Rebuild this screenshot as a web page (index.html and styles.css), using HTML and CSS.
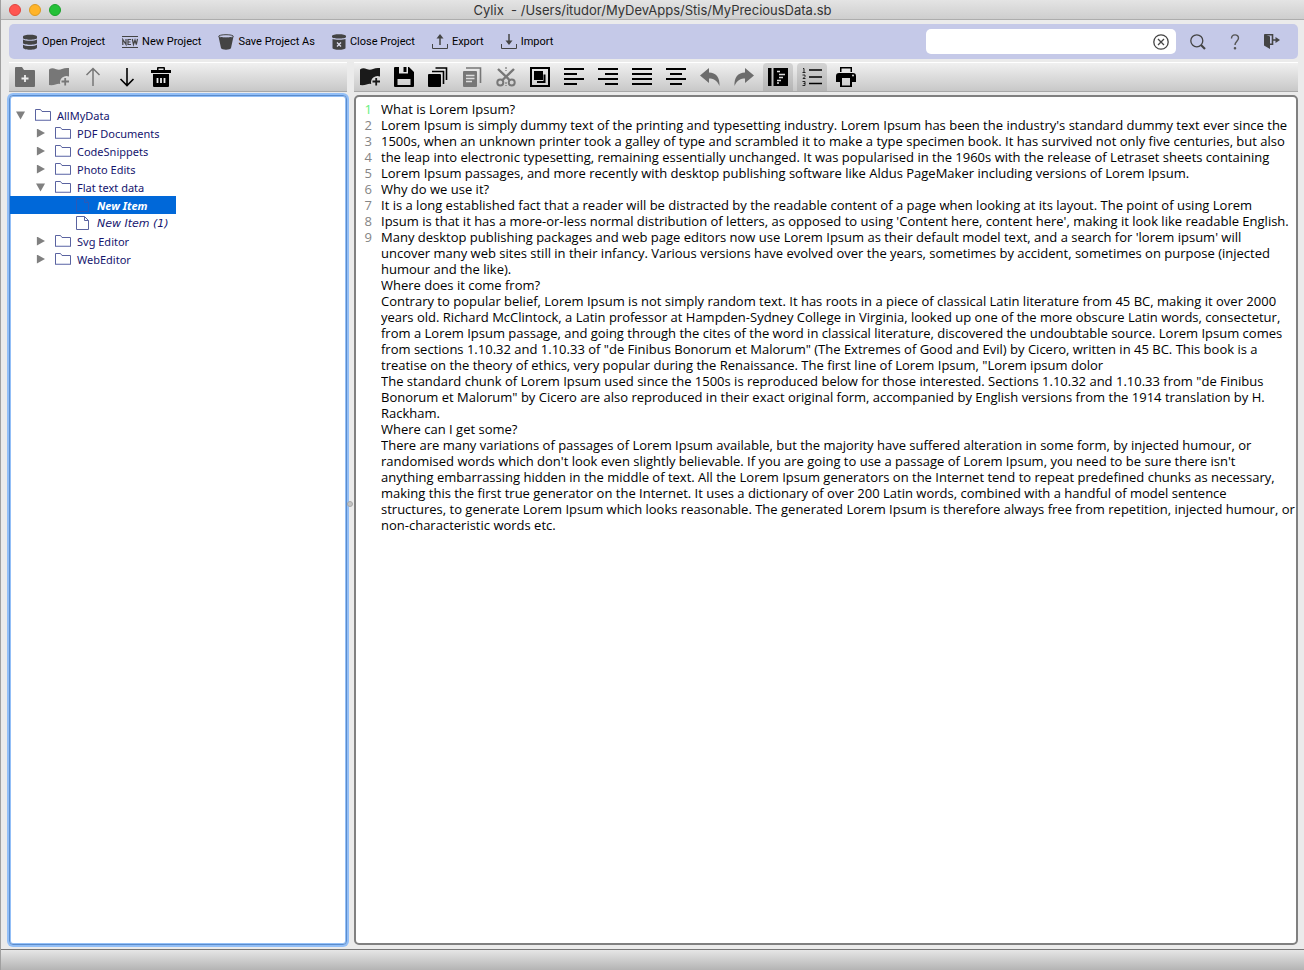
FILE: index.html
```html
<!DOCTYPE html>
<html lang="en">
  <head>
    <meta charset="UTF-8" />
    <meta name="viewport" content="width=device-width, initial-scale=1.0" />
    <title>Cylix - /Users/itudor/MyDevApps/Stis/MyPreciousData.sb</title>
    <link rel="stylesheet" href="styles.css" />
  </head>
  <body>
    <!-- shared shapes for the tree -->
    <svg class="defs" aria-hidden="true">
      <symbol id="folder" viewBox="0 0 16 14">
        <path d="M.5 12.5v-11h5l1.500 2h8.500v9z" fill="none" stroke="#5a63a0" />
        <path d="M1 12h14" stroke="#a9b0d4" />
      </symbol>
      <symbol id="file" viewBox="0 0 16 16">
        <path d="M1.500 1.500h8l4 4v9h-12zM9.500 1.500v4h4" fill="none" stroke="currentColor" />
      </symbol>
    </svg>

    <header class="titlebar">
      <div class="lights">
        <button class="light red" aria-label="Close window"></button>
        <button class="light yellow" aria-label="Minimize window"></button>
        <button class="light green" aria-label="Zoom window"></button>
      </div>
      <h1 class="title">Cylix&nbsp; - /Users/itudor/MyDevApps/Stis/MyPreciousData.sb</h1>
    </header>

    <main class="content">
      <nav class="menu">
        <button class="menu-btn">
          <svg width="16" height="16" viewBox="0 0 16 16" fill="#444"><path d="M1 2.500C1 0 15 0 15 2.500v1.500c0 2.300-14 2.300-14 0zM1 5.500c2 1.700 12 1.700 14 0V9c0 2.300-14 2.300-14 0zM1 10.800c2 1.700 12 1.700 14 0v2.700c0 3-14 3-14 0z" /></svg>
          Open Project
        </button>
        <button class="menu-btn">
          <svg width="16" height="16" viewBox="0 0 16 16" fill="none" stroke="#444"><path d="M0 2.500h16M0 13.500h16" /><path d="M.8 11V5.500L4 10.500V5M9 5.500H6v5h3M6 8h2.500M10.300 5l1.200 5.500L13 6l1.300 4.500L15.500 5" stroke-width="1.200" /></svg>
          New Project
        </button>
        <button class="menu-btn">
          <svg width="16" height="16" viewBox="0 0 16 16"><path d="M.5 2.500c2 2 13 2 15 0L13 14c-.5 2.300-9.500 2.300-10 0z" fill="#444" /><ellipse cx="8" cy="2.300" rx="7.400" ry="1.600" fill="#c5c9e8" stroke="#444" /></svg>
          Save Project As
        </button>
        <button class="menu-btn">
          <svg width="14" height="16" viewBox="0 0 14 16"><path d="M0 2c0-2.400 14-2.400 14 0v1c0 2-14 2-14 0zM.5 5c2 1 11 1 13 0v9c0 2.400-13 2.400-13 0z" fill="#444" /><path d="M5 8.500l4 4M9 8.500l-4 4" stroke="#dde" stroke-width="1.300" /></svg>
          Close Project
        </button>
        <button class="menu-btn">
          <svg width="16" height="16" viewBox="0 0 16 16" fill="none" stroke="#444"><path d="M.5 10v4.500h15V10" /><path d="M8 11V3" stroke-width="1.500" /><path d="M4.500 4.500L8 0l3.500 4.500z" fill="#444" stroke="none" /></svg>
          Export
        </button>
        <button class="menu-btn">
          <svg width="16" height="16" viewBox="0 0 16 16" fill="none" stroke="#444"><path d="M.5 10v4.500h15V10" /><path d="M8 0v8" stroke-width="1.500" /><path d="M4.500 6.500L8 11l3.500-4.500z" fill="#444" stroke="none" /></svg>
          Import
        </button>
        <div class="search">
          <input class="search-input" type="text" aria-label="Search" />
          <button class="icon-btn" aria-label="Clear search">
            <svg width="16" height="16" viewBox="0 0 16 16" fill="none" stroke="#444" stroke-width="1.300"><circle cx="8" cy="8" r="7.200" /><path d="M5 5l6 6M11 5l-6 6" /></svg>
          </button>
        </div>
        <div class="menu-end">
          <button class="icon-btn" aria-label="Find">
            <svg width="16" height="16" viewBox="0 0 16 16" fill="none" stroke="#444"><circle cx="6.800" cy="6.800" r="6" stroke-width="1.300" /><path d="M11 11l4 4" stroke-width="2.200" /></svg>
          </button>
          <button class="icon-btn" aria-label="Help">
            <svg width="16" height="16" viewBox="0 0 16 16" fill="none" stroke="#555" stroke-width="1.400"><path d="M4.500 4.500C4.500-.3 11.500-.3 11.500 4c0 3-3.500 3.500-3.500 7" /><circle cx="8" cy="14.300" r=".6" fill="#555" /></svg>
          </button>
          <button class="icon-btn" aria-label="Exit">
            <svg width="16" height="16" viewBox="0 0 16 16"><path d="M0 0l6 2.500V15l-6-3.500z" fill="#444" /><path d="M1 .7h7.500v9.500H6M9 6h3" fill="none" stroke="#444" stroke-width="1.600" /><path d="M11.500 3l4.500 3-4.500 3z" fill="#444" /></svg>
          </button>
        </div>
      </nav>

      <div class="split">
        <section class="side">
          <div class="toolbar">
            <button class="tool" aria-label="New folder" disabled>
              <svg width="20" height="20" viewBox="0 0 20 20"><path d="M0 1q0-1 1-1h6l2 3h10q1 0 1 1v15q0 1-1 1H1q-1 0-1-1z" fill="#6c6c6c" /><path d="M6.500 11.500h7M10 8v7" stroke="#eee" stroke-width="1.800" /></svg>
            </button>
            <button class="tool" aria-label="New item" disabled>
              <svg width="20" height="20" viewBox="0 0 20 20"><path d="M0 2.500q3-2 6.500-.5t6.500 0T20 1v8.500a6.500 6.500 0 0 0-8.800 7.500q-2-.5-4.700.5T0 18z" fill="#777" /><path d="M12.500 14.500h7.500M16.200 11v7.500" stroke="#777" stroke-width="1.800" /></svg>
            </button>
            <button class="tool" aria-label="Move up" disabled>
              <svg width="20" height="20" viewBox="0 0 20 20" fill="none" stroke="#777" stroke-width="1.500"><path d="M10 19V1.500M3.500 8L10 1.500 16.500 8" /></svg>
            </button>
            <button class="tool" aria-label="Move down">
              <svg width="20" height="20" viewBox="0 0 20 20" fill="none" stroke="#000" stroke-width="1.600"><path d="M10 1v17.500M3.500 12l6.500 6.500 6.500-6.500" /></svg>
            </button>
            <button class="tool" aria-label="Delete">
              <svg width="20" height="20" viewBox="0 0 20 20"><path d="M0 3h6V1q0-1 1-1h6q1 0 1 1v2h6v3H0zM7.500 1.500V3h5V1.500zM2 7h16v12q0 1-1 1H3q-1 0-1-1z" fill-rule="evenodd" /><path d="M6.500 11v5M10 11v5M13.500 11v5" stroke="#eee" stroke-width="1.800" /></svg>
            </button>
          </div>
          <div class="tree-pane">
            <ul class="tree">
              <li>
                <div class="node"><button class="toggle open" aria-label="Collapse"></button><svg class="icon"><use href="#folder" /></svg>AllMyData</div>
                <ul>
                  <li><div class="node"><button class="toggle" aria-label="Expand"></button><svg class="icon"><use href="#folder" /></svg>PDF Documents</div></li>
                  <li><div class="node"><button class="toggle" aria-label="Expand"></button><svg class="icon"><use href="#folder" /></svg>CodeSnippets</div></li>
                  <li><div class="node"><button class="toggle" aria-label="Expand"></button><svg class="icon"><use href="#folder" /></svg>Photo Edits</div></li>
                  <li>
                    <div class="node"><button class="toggle open" aria-label="Collapse"></button><svg class="icon"><use href="#folder" /></svg>Flat text data</div>
                    <ul>
                      <li><div class="node leaf selected"><svg class="icon"><use href="#file" /></svg>New Item</div></li>
                      <li><div class="node leaf"><svg class="icon"><use href="#file" /></svg>New Item (1)</div></li>
                    </ul>
                  </li>
                  <li><div class="node"><button class="toggle" aria-label="Expand"></button><svg class="icon"><use href="#folder" /></svg>Svg Editor</div></li>
                  <li><div class="node"><button class="toggle" aria-label="Expand"></button><svg class="icon"><use href="#folder" /></svg>WebEditor</div></li>
                </ul>
              </li>
            </ul>
          </div>
        </section>

        <div class="splitter"><span class="grip"></span></div>

        <section class="main">
          <div class="toolbar">
            <button class="tool" aria-label="New item">
              <svg width="20" height="20" viewBox="0 0 20 20"><path d="M0 2.500q3-2 6.500-.5t6.500 0T20 1v8.500a6.500 6.500 0 0 0-8.800 7.500q-2-.5-4.700.5T0 18z" fill="#1a1a1a" /><path d="M12.500 14.500h7.500M16.200 11v7.500" stroke="#1a1a1a" stroke-width="1.800" /></svg>
            </button>
            <button class="tool" aria-label="Save">
              <svg width="20" height="20" viewBox="0 0 20 20"><path d="M0 1q0-1 1-1h14l5 5v14q0 1-1 1H1q-1 0-1-1zM5 0v6.500h9V0zM3.500 12v6h13v-6z" fill-rule="evenodd" /><path d="M9.500 0h3v5h-3z" /></svg>
            </button>
            <button class="tool" aria-label="Copy">
              <svg width="20" height="20" viewBox="0 0 20 20"><rect x="0" y="7" width="13" height="13" rx="1" /><path d="M4 4.500h11.500V17M7.500 1H18.500v12" fill="none" stroke="#000" stroke-width="1.600" /></svg>
            </button>
            <button class="tool" aria-label="Paste" disabled>
              <svg width="20" height="20" viewBox="0 0 20 20"><rect x="1" y="4" width="14" height="16" rx="1" fill="#777" /><path d="M4 1h14.500v15" fill="none" stroke="#777" stroke-width="1.600" /><path d="M4 8.500h8.500M4 11.500h8.500M4 14.500h6" stroke="#ddd" stroke-width="1.400" /></svg>
            </button>
            <button class="tool" aria-label="Cut" disabled>
              <svg width="20" height="20" viewBox="0 0 20 20" fill="none" stroke="#777" stroke-width="2"><circle cx="4.300" cy="15.500" r="3" /><circle cx="15.700" cy="15.500" r="3" /><path d="M2 2l12 11.500M18 2L6 13.500" stroke-width="2.400" /><path d="M10 0v4M10 15v4" stroke-width="1.200" stroke-dasharray="2 1" /></svg>
            </button>
            <button class="tool" aria-label="Select all">
              <svg width="20" height="20" viewBox="0 0 20 20"><path d="M1 1h18v18H1z" fill="none" stroke="#000" stroke-width="2" /><path d="M4 4h9v9H4z" /><path d="M14.500 7.500v7.500H7" fill="none" stroke="#000" stroke-width="2" /></svg>
            </button>
            <button class="tool" aria-label="Align left">
              <svg width="20" height="20" viewBox="0 0 20 20" stroke="#000" stroke-width="1.800"><path d="M0 2h20M0 7h13M0 12h20M0 17h13" /></svg>
            </button>
            <button class="tool" aria-label="Align right">
              <svg width="20" height="20" viewBox="0 0 20 20" stroke="#000" stroke-width="1.800"><path d="M0 2h20M7 7h13M0 12h20M7 17h13" /></svg>
            </button>
            <button class="tool" aria-label="Justify">
              <svg width="20" height="20" viewBox="0 0 20 20" stroke="#000" stroke-width="1.800"><path d="M0 2h20M0 7h20M0 12h20M0 17h20" /></svg>
            </button>
            <button class="tool" aria-label="Align center">
              <svg width="20" height="20" viewBox="0 0 20 20" stroke="#000" stroke-width="1.800"><path d="M0 2h20M4 7h12M0 12h20M4 17h12" /></svg>
            </button>
            <button class="tool" aria-label="Undo" disabled>
              <svg width="20" height="20" viewBox="0 0 20 20"><path d="M0 8.500L9 1v4.500c7 0 11 5 10.500 13.500C17 13 13 11.500 9 11.500V16z" fill="#6c6c6c" /></svg>
            </button>
            <button class="tool" aria-label="Redo" disabled>
              <svg width="20" height="20" viewBox="0 0 20 20"><path d="M20 8.500L11 1v4.500C4 5.500 0 10.500.5 19 3 13 7 11.500 11 11.500V16z" fill="#6c6c6c" /></svg>
            </button>
            <button class="tool active" aria-label="Wrap text" aria-pressed="true">
              <svg width="20" height="20" viewBox="0 0 20 20"><path d="M0 1h3.500v18H0zM5.500 1H20v18H5.500z" /><path d="M9 4.500h3M11 7.500h6M11 10.500h4M9 13.500h4M9 16h2" stroke="#ddd" stroke-width="1.400" /></svg>
            </button>
            <button class="tool active" aria-label="Line numbers" aria-pressed="true">
              <svg width="20" height="20" viewBox="0 0 20 20" fill="none" stroke="#000"><path d="M7 3h13M7 10h13M7 16.500h13" stroke-width="1.600" /><path d="M1 1.500h1v4M.5 5.500h3M.5 8h2.500v1.500l-2 2h2.500M.5 14.500H3v4H.5M1.500 16.500H3" stroke="#222" /></svg>
            </button>
            <button class="tool" aria-label="Print">
              <svg width="20" height="20" viewBox="0 0 20 20"><path d="M4 0h12v5H4zM5.500 1.500V5h9V1.500zM3 6h14q3 0 3 3v6h-4v5H4v-5H0V9q0-3 3-3zM6 11v7.500h8V11z" fill-rule="evenodd" /><circle cx="17" cy="8.500" r="1" fill="#ddd" /></svg>
            </button>
          </div>
          <div class="editor">
            <ol class="gutter" aria-hidden="true">
              <li class="current">1</li>
              <li>2</li>
              <li>3</li>
              <li>4</li>
              <li>5</li>
              <li>6</li>
              <li>7</li>
              <li>8</li>
              <li>9</li>
            </ol>
            <textarea class="text" aria-label="Item text" spellcheck="false">
What is Lorem Ipsum?
Lorem Ipsum is simply dummy text of the printing and typesetting industry. Lorem Ipsum has been the industry's standard dummy text ever since the
1500s, when an unknown printer took a galley of type and scrambled it to make a type specimen book. It has survived not only five centuries, but also
the leap into electronic typesetting, remaining essentially unchanged. It was popularised in the 1960s with the release of Letraset sheets containing
Lorem Ipsum passages, and more recently with desktop publishing software like Aldus PageMaker including versions of Lorem Ipsum.
Why do we use it?
It is a long established fact that a reader will be distracted by the readable content of a page when looking at its layout. The point of using Lorem
Ipsum is that it has a more-or-less normal distribution of letters, as opposed to using 'Content here, content here', making it look like readable English.
Many desktop publishing packages and web page editors now use Lorem Ipsum as their default model text, and a search for 'lorem ipsum' will
uncover many web sites still in their infancy. Various versions have evolved over the years, sometimes by accident, sometimes on purpose (injected
humour and the like).
Where does it come from?
Contrary to popular belief, Lorem Ipsum is not simply random text. It has roots in a piece of classical Latin literature from 45 BC, making it over 2000
years old. Richard McClintock, a Latin professor at Hampden-Sydney College in Virginia, looked up one of the more obscure Latin words, consectetur,
from a Lorem Ipsum passage, and going through the cites of the word in classical literature, discovered the undoubtable source. Lorem Ipsum comes
from sections 1.10.32 and 1.10.33 of "de Finibus Bonorum et Malorum" (The Extremes of Good and Evil) by Cicero, written in 45 BC. This book is a
treatise on the theory of ethics, very popular during the Renaissance. The first line of Lorem Ipsum, "Lorem ipsum dolor
The standard chunk of Lorem Ipsum used since the 1500s is reproduced below for those interested. Sections 1.10.32 and 1.10.33 from "de Finibus
Bonorum et Malorum" by Cicero are also reproduced in their exact original form, accompanied by English versions from the 1914 translation by H.
Rackham.
Where can I get some?
There are many variations of passages of Lorem Ipsum available, but the majority have suffered alteration in some form, by injected humour, or
randomised words which don't look even slightly believable. If you are going to use a passage of Lorem Ipsum, you need to be sure there isn't
anything embarrassing hidden in the middle of text. All the Lorem Ipsum generators on the Internet tend to repeat predefined chunks as necessary,
making this the first true generator on the Internet. It uses a dictionary of over 200 Latin words, combined with a handful of model sentence
structures, to generate Lorem Ipsum which looks reasonable. The generated Lorem Ipsum is therefore always free from repetition, injected humour, or
non-characteristic words etc.</textarea>
          </div>
        </section>
      </div>
    </main>

    <footer class="status"></footer>
  </body>
</html>
```

FILE: styles.css
```css
* {
  padding: 0;
  margin: 0;
  box-sizing: border-box;
}
body {
  height: 100vh;
  display: flex;
  flex-direction: column;
  background: #ebebeb;
  border-left: 1px solid #a0a0a0;
  font-family: Inter, 'Liberation Sans', sans-serif;
  font-size: 13px;
  color: #000;
  overflow: hidden;
}
button {
  border: 0;
  background: none;
  font: inherit;
  color: inherit;
}
ul,
ol {
  list-style: none;
}
.defs {
  display: none;
}

/* title bar */
.titlebar {
  height: 20px;
  flex: none;
  display: grid;
  grid-template-columns: 1fr auto 1fr;
  align-items: center;
  background: linear-gradient(#e4e4e4, #cecece);
  border-bottom: 1px solid #adadad;
}
.lights {
  display: flex;
  gap: 8px;
  padding-left: 8px;
}
.light {
  width: 12px;
  height: 12px;
  border-radius: 50%;
  border: 1px solid #e0443e;
  background: #ff5550;
}
.light.yellow {
  background: #ffb429;
  border-color: #dc9a22;
}
.light.green {
  background: #24c138;
  border-color: #1ba22c;
}
.title {
  font-size: 13px;
  font-weight: 400;
  line-height: 18px;
  color: #333;
}

.content {
  flex: 1;
  min-height: 0;
  display: flex;
  flex-direction: column;
  padding: 4px 6px 4px 8px;
}

/* project menu */
.menu {
  height: 35px;
  flex: none;
  display: flex;
  align-items: center;
  gap: 17px;
  padding: 0 18px 0 13px;
  background: #c5c9e8;
  border-radius: 5px;
}
.menu svg {
  display: block;
}
.menu-btn {
  display: flex;
  align-items: center;
  gap: 4px;
  font-family: Roboto, 'Liberation Sans', sans-serif;
  font-size: 11px;
  line-height: 16px;
  white-space: nowrap;
}
.search {
  width: 250px;
  height: 25px;
  display: flex;
  align-items: center;
  margin-left: auto;
  padding: 0 7px;
  background: #fff;
  border-radius: 5px;
}
.search-input {
  flex: 1;
  min-width: 0;
  border: 0;
  outline: 0;
  background: none;
  font: inherit;
}
.menu-end {
  display: flex;
  gap: 21px;
  margin-left: -3px;
}

/* split view */
.split {
  flex: 1;
  min-height: 0;
  display: flex;
  margin-top: 3px;
}
.side {
  width: 338px;
  flex: none;
  display: flex;
  flex-direction: column;
}
.main {
  flex: 1;
  min-width: 0;
  display: flex;
  flex-direction: column;
}
.splitter {
  width: 7px;
  display: flex;
  align-items: center;
  cursor: col-resize;
}
.grip {
  width: 6px;
  height: 6px;
  border: 1px solid #a8a8a8;
  border-radius: 50%;
  background: #c4c4c4;
  z-index: 1;
}
.toolbar {
  height: 30px;
  flex: none;
  display: flex;
  gap: 4px;
  padding: 0 1px;
  background: linear-gradient(#f0f0f0, #c8c8c8);
  border-top: 1px solid #fff;
  border-bottom: 1px solid #a8a8a8;
}
.tool {
  width: 30px;
  display: flex;
  align-items: center;
  justify-content: center;
}
.tool.active {
  background: linear-gradient(#d4d4d4, #b4b4b4);
  border-radius: 4px 4px 0 0;
}

/* project tree */
.tree-pane {
  flex: 1;
  margin-top: 3px;
  padding-top: 10px;
  background: #fff;
  border: 1px solid #5b8ccb;
  border-radius: 4px;
  box-shadow: 0 0 0 2px #93bff7, inset 0 0 0 1px #93bff7;
}
.tree {
  font-family: 'Noto Sans', sans-serif;
  font-size: 11px;
  color: #15156e;
}
.node {
  height: 18px;
  display: flex;
  align-items: center;
  padding-left: 6px;
}
.tree ul .node {
  padding-left: 26px;
}
.toggle {
  width: 9px;
  height: 9px;
  margin-right: 10px;
  background: #808080;
  clip-path: polygon(10% 0, 100% 50%, 10% 100%);
}
.toggle.open {
  clip-path: polygon(0 10%, 100% 10%, 50% 100%);
}
.icon {
  width: 16px;
  height: 14px;
  margin-right: 6px;
}
.tree ul .leaf {
  width: 166px;
  padding-left: 65px;
  font-family: 'DejaVu Sans', sans-serif;
  font-style: italic;
}
.leaf .icon {
  height: 16px;
  color: #5a63a0;
}
.tree ul .selected {
  background: #0068d9;
  color: #fff;
  font-family: 'Noto Sans', sans-serif;
  font-weight: 700;
}
.selected .icon {
  color: #2a5ab8;
}

/* text editor */
.editor {
  flex: 1;
  min-height: 0;
  display: flex;
  margin-top: 3px;
  padding-top: 4px;
  background: #fff;
  border: 2px solid #808080;
  border-radius: 5px;
  font-family: 'Open Sans', sans-serif;
  line-height: 16px;
}
.gutter {
  width: 16px;
  margin-right: 9px;
  text-align: right;
  color: #858585;
}
.gutter .current {
  color: #62ef7c;
}
.text {
  flex: 1;
  min-width: 0;
  border: 0;
  outline: 0;
  resize: none;
  background: none;
  font: inherit;
  color: inherit;
  white-space: pre;
  overflow: hidden;
}

.status {
  height: 21px;
  flex: none;
  background: linear-gradient(#e6e6e6, #b4b4b4);
  border-top: 1px solid #777;
}
```
